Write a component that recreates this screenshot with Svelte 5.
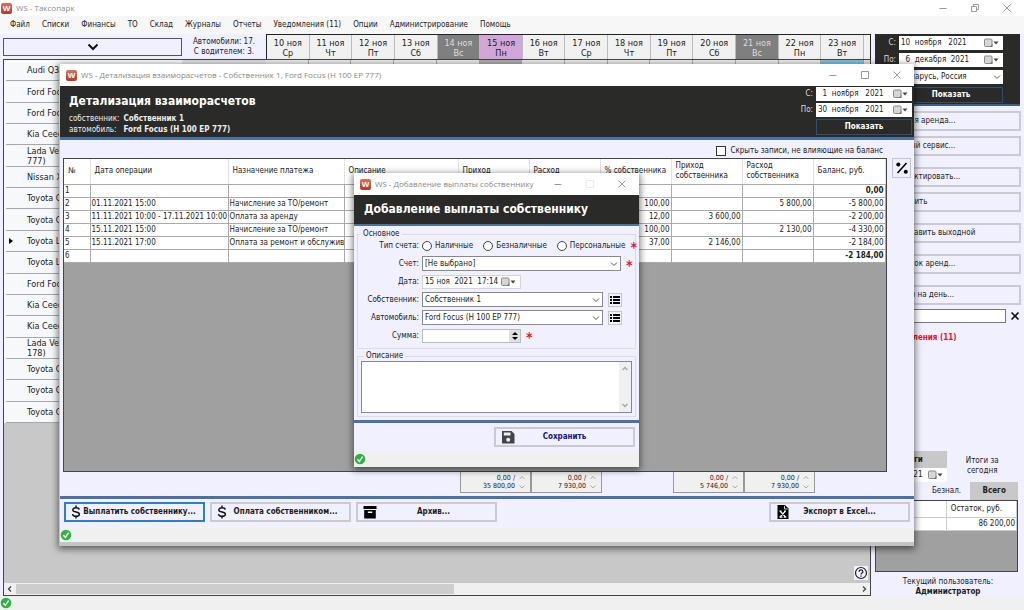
<script lang="ts">
  type Day = { date: string; dow: string; kind?: string };

  const menu = ['Файл', 'Списки', 'Финансы', 'ТО', 'Склад', 'Журналы', 'Отчеты', 'Уведомления (11)', 'Опции', 'Администрирование', 'Помощь'];

  const days: Day[] = [
    { date: '10 ноя', dow: 'Ср' },
    { date: '11 ноя', dow: 'Чт' },
    { date: '12 ноя', dow: 'Пт' },
    { date: '13 ноя', dow: 'Сб' },
    { date: '14 ноя', dow: 'Вс', kind: 'off' },
    { date: '15 ноя', dow: 'Пн', kind: 'today' },
    { date: '16 ноя', dow: 'Вт' },
    { date: '17 ноя', dow: 'Ср' },
    { date: '18 ноя', dow: 'Чт' },
    { date: '19 ноя', dow: 'Пт' },
    { date: '20 ноя', dow: 'Сб' },
    { date: '21 ноя', dow: 'Вс', kind: 'off' },
    { date: '22 ноя', dow: 'Пн' },
    { date: '23 ноя', dow: 'Вт', kind: 'busy' },
  ];

  const cars = [
    'Audi Q3', 'Ford Focus', 'Ford Focus', 'Kia Ceed', 'Lada Vesta 777)', 'Nissan X', 'Toyota C', 'Toyota C', 'Toyota L',
    'Toyota L', 'Ford Focus', 'Kia Ceed', 'Kia Ceed', 'Lada Vesta 178)', 'Toyota C', 'Toyota C', 'Toyota C',
  ];
  const currentCar = 8;

  const actions = [
    ['Новая аренда...', 'Новый сервис...'],
    ['Редактировать...', 'Удалить'],
    ['Поставить выходной'],
    ['Список аренд...'],
    ['План на день...'],
  ];

  const columns = [
    { title: '№', width: 26 },
    { title: 'Дата операции', width: 138 },
    { title: 'Назначение платежа', width: 116 },
    { title: 'Описание', width: 114 },
    { title: 'Приход', width: 71 },
    { title: 'Расход', width: 71 },
    { title: '% собственника', width: 71 },
    { title: 'Приход собственника', width: 71 },
    { title: 'Расход собственника', width: 71 },
    { title: 'Баланс, руб.', width: 72 },
  ];

  const rows = [
    ['1', '', '', '', '', '', '', '', '', '0,00'],
    ['2', '01.11.2021 15:00', 'Начисление за ТО/ремонт', '', '', '', '100,00', '', '5 800,00', '-5 800,00'],
    ['3', '11.11.2021 10:00 - 17.11.2021 10:00', 'Оплата за аренду', '', '', '', '12,00', '3 600,00', '', '-2 200,00'],
    ['4', '15.11.2021 15:00', 'Начисление за ТО/ремонт', '', '', '', '100,00', '', '2 130,00', '-4 330,00'],
    ['5', '15.11.2021 17:00', 'Оплата за ремонт и обслужив', '', '', '', '37,00', '2 146,00', '', '-2 184,00'],
    ['6', '', '', '', '', '', '', '', '', '-2 184,00'],
  ];

  const totals = [['35 800,00', '7 930,00'], ['5 746,00', '7 930,00']];
  const accountTypes = ['Наличные', 'Безналичные', 'Персональные'];

  let hideZero = $state(false);
  let accountType = $state('');
  let amount = $state('');
  let note = $state('');
</script>

{#snippet chevron()}
  <svg class="chevron" viewBox="0 0 8 8" aria-hidden="true"><path d="M1 2.5 4 5.5 7 2.5" /></svg>
{/snippet}

{#snippet ok()}
  <svg class="ok" viewBox="0 0 12 12" aria-hidden="true">
    <circle cx="6" cy="6" r="5.3" fill="#2fb344" />
    <path d="M3.4 6.3 5.3 8.4 8.6 3.6" fill="none" stroke="#fff" stroke-width="1.5" />
  </svg>
{/snippet}

{#snippet winButtons(mode: string)}
  <div class="win-buttons {mode}">
    <button aria-label="Свернуть"><svg viewBox="0 0 10 10"><path d="M1.5 5.5h7" /></svg></button>
    <button aria-label="Развернуть" disabled={mode === 'modal'}>
      <svg viewBox="0 0 10 10">
        {#if mode === 'main'}
          <path d="M1.5 3.5h5v5h-5zM3.5 3.5v-2h5v5h-2" />
        {:else}
          <path d="M1.5 1.5h7v7h-7z" />
        {/if}
      </svg>
    </button>
    <button aria-label="Закрыть"><svg viewBox="0 0 10 10"><path d="M1.5 1.5l7 7M8.5 1.5l-7 7" /></svg></button>
  </div>
{/snippet}

{#snippet titleBar(text: string, mode: string)}
  <header class="title-bar {mode}">
    <span class="logo">W</span>
    <span class="caption">{text}</span>
    {@render winButtons(mode)}
  </header>
{/snippet}

{#snippet dateField(id: string, value: string)}
  <div class="date">
    <input {id} type="text" {value} />
    <button type="button" aria-label="Календарь">
      <svg viewBox="0 0 16 10">
        <rect x="1.5" y="1" width="7.5" height="7.5" rx="1" fill="#d6d6d6" stroke="#8a8a8a" />
        <path d="M6.5 9 9.5 6V9z" fill="#777" />
        <path d="M10.5 3.5h5L13 6.5z" fill="#444" />
      </svg>
    </button>
  </div>
{/snippet}

{#snippet listButton(label: string)}
  <button type="button" class="list-btn" aria-label={label}>
    <svg viewBox="0 0 12 10">
      <path d="M1 1h2v2H1zM4 1h7v2H4zM1 4h2v2H1zM4 4h7v2H4zM1 7h2v2H1zM4 7h7v2H4z" />
    </svg>
  </button>
{/snippet}

{#snippet dollar()}
  <svg class="dollar" viewBox="0 0 10 14" aria-hidden="true">
    <path d="M5 .5v2.500M5 11v2.500M8.300 4.600C8 3.400 6.700 2.800 5 2.800 3 2.800 1.800 3.600 1.800 4.900c0 3 6.600 1.300 6.600 4.300 0 1.300-1.300 2.100-3.400 2.100-2 0-3.300-.8-3.500-2.200" />
  </svg>
{/snippet}

<div class="app">
  {@render titleBar('WS - Таксопарк', 'main')}
  <nav class="menu">
    {#each menu as item}
      <button>{item}</button>
    {/each}
  </nav>

  <div class="workspace">
    <main class="schedule">
      <div class="schedule-top">
        <button class="filter" aria-label="Фильтр">
          <svg viewBox="0 0 12 8"><path d="M1.500 1.500 6 6l4.500-4.500" /></svg>
        </button>
        <p class="counts">Автомобили: 17.<br />С водителем: 3.</p>
        <div class="days">
          {#each days as day}
            <div class="day {day.kind ?? ''}">{day.date}<br />{day.dow}</div>
          {/each}
        </div>
      </div>
      <div class="board">
        <div class="board-body">
          <ul class="cars">
            {#each cars as car, i}
              <li>
                <span class="marker">{#if i === currentCar}<svg viewBox="0 0 4 6"><path d="M0 0l4 3-4 3z" /></svg>{/if}</span>
                <span class="car">{car}</span>
              </li>
            {/each}
          </ul>
          <div class="slots">
            {#each days as day}
              <div class="slot {day.kind ?? ''}"></div>
            {/each}
          </div>
          <button class="help" aria-label="Справка">
            <svg viewBox="0 0 14 14">
              <circle cx="7" cy="7" r="5.500" />
              <path d="M5.200 5.700c0-2.500 3.700-2.300 3.700 0C8.900 7 7 7 7 8.600M7 9.500v1.200" />
            </svg>
          </button>
        </div>
        <div class="hscroll">
          <button aria-label="Влево"><svg viewBox="0 0 8 8"><path d="M5 1.500 2.500 4 5 6.500" /></svg></button>
          <div class="track"><div class="thumb"></div></div>
          <button aria-label="Вправо"><svg viewBox="0 0 8 8"><path d="M3 1.500 5.500 4 3 6.500" /></svg></button>
        </div>
      </div>
    </main>

    <aside class="side">
      <div class="period">
        <label for="from">С:</label>
        {@render dateField('from', '10  ноября   2021')}
        <label for="to">По:</label>
        {@render dateField('to', '  6  декабря  2021')}
        <div class="select region">
          <select aria-label="Регион"><option>Беларусь, Россия</option></select>
          {@render chevron()}
        </div>
        <button class="show">Показать</button>
      </div>
      <div class="actions">
        {#each actions as group}
          <div class="group">
            {#each group as action}
              <button class="flat">{action}</button>
            {/each}
          </div>
        {/each}
      </div>
      <div class="search">
        <input type="text" aria-label="Поиск" />
        <button aria-label="Очистить"><svg viewBox="0 0 10 10"><path d="M1.500 1.500l7 7M8.500 1.500l-7 7" /></svg></button>
      </div>
      <a class="alerts" href="#alerts">Уведомления (11)</a>

      <section class="summary">
        <div class="summary-top">
          <div>
            <div class="tab active">Итоги</div>
            {@render dateField('day', '15 ноя 2021')}
          </div>
          <p>Итоги за<br />сегодня</p>
        </div>
        <div class="tabs">
          <button>Нал.</button>
          <button>Безнал.</button>
          <button class="active">Всего</button>
        </div>
        <div class="balance">
          <table>
            <thead><tr><th></th><th>Остаток, руб.</th></tr></thead>
            <tbody><tr><td></td><td class="num">86 200,00</td></tr></tbody>
          </table>
        </div>
        <p class="user">Текущий пользователь:<br /><b>Администратор</b></p>
      </section>
    </aside>
  </div>
  <footer class="status">{@render ok()}</footer>

  <section class="window details">
    {@render titleBar('WS - Детализация взаиморасчетов - Собственник 1, Ford Focus (Н 100 ЕР 777)', 'child')}
    <div class="head">
      <div>
        <h1>Детализация взаиморасчетов</h1>
        <dl>
          <dt>собственник:</dt><dd>Собственник 1</dd>
          <dt>автомобиль:</dt><dd>Ford Focus (Н 100 ЕР 777)</dd>
        </dl>
      </div>
      <div class="period">
        <label for="d-from">С:</label>
        {@render dateField('d-from', '  1  ноября   2021')}
        <label for="d-to">По:</label>
        {@render dateField('d-to', '30  ноября   2021')}
        <button class="show">Показать</button>
      </div>
    </div>
    <div class="details-body">
      <label class="hide-zero"><input type="checkbox" bind:checked={hideZero} />Скрыть записи, не влияющие на баланс</label>
      <div class="grid-row">
        <div class="grid">
          <table>
            <colgroup>
              {#each columns as c}<col style="width: {c.width}px" />{/each}
            </colgroup>
            <thead>
              <tr>{#each columns as c}<th>{c.title}</th>{/each}</tr>
            </thead>
            <tbody>
              {#each rows as row, r}
                <tr>
                  {#each row as cell, i}
                    <td class:num={i > 3} class:strong={i === 9 && (r === 0 || r === rows.length - 1)}>{cell}</td>
                  {/each}
                </tr>
              {/each}
            </tbody>
          </table>
        </div>
        <button class="percent" aria-label="Процент">
          <svg viewBox="0 0 14 14">
            <path d="M11.500 2 2.500 12" fill="none" stroke="#000" stroke-width="1.600" />
            <circle cx="3.300" cy="3.500" r="2" /><circle cx="10.800" cy="10.800" r="2" />
          </svg>
        </button>
      </div>
      <div class="totals">
        {#each totals as pair}
          <div class="pair">
            {#each pair as sum}
              <div class="total">
                <span>0,00 /<br />{sum}</span>
                <svg viewBox="0 0 8 16"><path d="M1.500 5 4 2.500 6.500 5M1.500 11.500 4 14l2.500-2.500" /></svg>
              </div>
            {/each}
          </div>
        {/each}
      </div>
    </div>
    <div class="toolbar">
      <button class="flat focus">{@render dollar()}<span>Выплатить собственнику...</span></button>
      <button class="flat">{@render dollar()}<span>Оплата собственником...</span></button>
      <button class="flat">
        <svg class="ico" viewBox="0 0 14 14"><path d="M.5 1h13v3H.5zM1.200 5h11.600v8.500H1.200z" /><path d="M4.800 6.500h4.400V8H4.800z" fill="#fff" /></svg>
        <span>Архив...</span>
      </button>
      <button class="flat centered export">
        <svg class="ico" viewBox="0 0 14 14"><path d="M1.500 0H9l3.500 3.500V14h-11z" /><path d="M8.500.8V4h3.300" fill="none" stroke="#fff" stroke-width=".8" /><path d="M4 6l5.500 6M9.500 6 4 12M3.500 12.200h3M7.800 12.200h2.500M3.500 6h2M8 6h2" fill="none" stroke="#fff" stroke-width="1.200" /></svg>
        <span>Экспорт в Excel...</span>
      </button>
    </div>
    <footer class="status">{@render ok()}</footer>
  </section>

  <section class="window payout">
    {@render titleBar('WS - Добавление выплаты собственнику', 'modal')}
    <div class="head"><h1>Добавление выплаты собственнику</h1></div>
    <form class="payout-body">
      <fieldset class="main-fields">
        <legend>Основное</legend>
        <span class="name">Тип счета:</span>
        <div class="line radios">
          {#each accountTypes as type}
            <label><input type="radio" name="account-type" value={type} bind:group={accountType} />{type}</label>
          {/each}
          <span class="required">*</span>
        </div>
        <label class="name" for="account">Счет:</label>
        <div class="line">
          <div class="select wide">
            <select id="account"><option>[Не выбрано]</option></select>
            {@render chevron()}
          </div>
          <span class="required">*</span>
        </div>
        <label class="name" for="when">Дата:</label>
        <div class="line">{@render dateField('when', '15 ноя  2021  17:14')}</div>
        <label class="name" for="owner">Собственник:</label>
        <div class="line">
          <div class="select">
            <select id="owner"><option>Собственник 1</option></select>
            {@render chevron()}
          </div>
          {@render listButton('Список собственников')}
        </div>
        <label class="name" for="car">Автомобиль:</label>
        <div class="line">
          <div class="select">
            <select id="car"><option>Ford Focus (Н 100 ЕР 777)</option></select>
            {@render chevron()}
          </div>
          {@render listButton('Список автомобилей')}
        </div>
        <label class="name" for="amount">Сумма:</label>
        <div class="line">
          <div class="spin">
            <input id="amount" type="text" bind:value={amount} />
            <div class="arrows">
              <button type="button" aria-label="Больше"><svg viewBox="0 0 6 4"><path d="M0 4l3-3 3 3z" /></svg></button>
              <button type="button" aria-label="Меньше"><svg viewBox="0 0 6 4"><path d="M0 0l3 3 3-3z" /></svg></button>
            </div>
          </div>
          <span class="required">*</span>
        </div>
      </fieldset>
      <fieldset class="note">
        <legend>Описание</legend>
        <div class="memo">
          <textarea aria-label="Описание" bind:value={note}></textarea>
          <div class="vscroll">
            <svg viewBox="0 0 8 8"><path d="M1.500 5 4 2.500 6.500 5" /></svg>
            <svg viewBox="0 0 8 8"><path d="M1.500 3 4 5.500 6.500 3" /></svg>
          </div>
        </div>
      </fieldset>
    </form>
    <div class="toolbar">
      <button class="flat centered save">
        <svg class="ico" viewBox="0 0 14 14"><path d="M1 1h9.500L13.500 4v9.500H1z" fill="#444" /><path d="M2.800 2.500h6.700v3H2.800z" fill="#eee" /><circle cx="7.200" cy="9.700" r="2" fill="#eee" /></svg>
        <span>Сохранить</span>
      </button>
    </div>
    <footer class="status">{@render ok()}</footer>
  </section>
</div>

<style>
  :global(body) {
    margin: 0;
  }
  .app,
  .app * {
    box-sizing: border-box;
  }
  .app {
    position: relative;
    display: flex;
    flex-direction: column;
    min-height: 100vh;
    overflow: hidden;
    background: #f0f0fe;
    color: #1c1c1c;
    font: 8px/10px 'DejaVu Sans Condensed', 'DejaVu Sans', sans-serif;
  }
  button,
  input,
  select,
  textarea {
    font: inherit;
    color: inherit;
    margin: 0;
    padding: 0;
    border: 0;
    border-radius: 0;
    background: none;
    outline: none;
    min-width: 0;
  }
  p,
  h1,
  dl,
  dd,
  ul {
    margin: 0;
    padding: 0;
  }
  svg {
    display: block;
    flex: none;
  }

  /* window chrome */
  .title-bar {
    display: flex;
    align-items: center;
    gap: 4px;
    height: 22px;
    padding-left: 6px;
    background: #fff;
    color: #888;
    font: 8px/12px 'Open Sans', sans-serif;
  }
  .title-bar.main {
    height: 16px;
    padding-left: 1px;
  }
  .logo {
    flex: none;
    width: 11px;
    height: 11px;
    border-radius: 2px;
    background: linear-gradient(#d9705c, #b03a2c);
    color: #fff;
    font: bold 8px/11px 'Liberation Sans', sans-serif;
    text-align: center;
  }
  .caption {
    white-space: nowrap;
  }
  .win-buttons {
    display: flex;
    gap: 22px;
    margin-left: auto;
    padding-right: 12px;
  }
  .win-buttons svg {
    width: 10px;
    height: 10px;
    fill: none;
    stroke: #999;
  }
  .win-buttons button:disabled {
    opacity: 0.2;
  }
  .status {
    display: flex;
    align-items: center;
    height: 14px;
    background: #f0f0f0;
  }
  .ok {
    width: 12px;
    height: 12px;
  }
  .menu {
    display: flex;
    gap: 12px;
    height: 18px;
    padding-left: 10px;
    background: #f7f7f7;
  }

  /* schedule */
  .workspace {
    flex: 1;
    display: flex;
    gap: 4px;
    padding: 0 3px;
  }
  .schedule {
    flex: 1;
    display: flex;
    flex-direction: column;
  }
  .schedule-top {
    display: flex;
    align-items: center;
    height: 25px;
  }
  .filter {
    display: grid;
    place-items: center;
    width: 179px;
    height: 18px;
    border: 1px solid #555;
  }
  .filter svg {
    width: 12px;
    height: 8px;
    fill: none;
    stroke: #111;
    stroke-width: 2;
  }
  .counts {
    width: 84px;
    text-align: center;
  }
  .days {
    flex: 1;
    display: grid;
    grid-template-columns: repeat(14, 1fr);
    align-self: stretch;
    padding-right: 6px;
    border: 1px solid #222;
    border-bottom: 0;
    background: #f1f1f1;
    font-size: 9px;
  }
  .day {
    padding-top: 3px;
    border-right: 1px solid #bbb;
    text-align: center;
  }
  .day.off {
    background: #7f7f7f;
    color: #ddd;
  }
  .day.today {
    background: #d3a6d9;
  }
  .board {
    flex: 1;
    display: flex;
    flex-direction: column;
    border: 1px solid #444;
    background: #c8c8c8;
  }
  .board-body {
    flex: 1;
    position: relative;
    display: flex;
    align-items: flex-start;
  }
  .cars {
    display: grid;
    grid-template-rows: repeat(17, 1fr);
    width: 178px;
    height: 363px;
    list-style: none;
    background: #f6f8fb;
    font-size: 9px;
  }
  .cars li {
    display: flex;
    align-items: center;
    margin-left: 2px;
    border-bottom: 1px solid #a8a8a8;
  }
  .marker {
    width: 21px;
    padding-left: 3px;
  }
  .marker svg {
    width: 4px;
    height: 6px;
  }
  .car {
    width: 54px;
  }
  .slots {
    flex: 1;
    display: grid;
    grid-template-columns: repeat(14, 1fr);
    height: 20px;
    padding: 0 6px 0 84px;
    background: #e2e2e2;
  }
  .slot {
    border-right: 1px solid #aaa;
    background: #ededed;
  }
  .slot.today {
    background: #b0b0b0;
  }
  .slot.busy {
    background: #7fc4e2;
  }
  .help {
    position: absolute;
    right: 2px;
    bottom: 3px;
    background: #f0f0fe;
  }
  .help svg {
    width: 14px;
    height: 14px;
    fill: none;
    stroke: #222;
    stroke-width: 1.2;
  }
  .hscroll {
    display: flex;
    align-items: center;
    height: 12px;
    background: #f0f0f0;
  }
  .hscroll button {
    width: 12px;
    padding: 0 2px;
  }
  .hscroll svg {
    width: 8px;
    height: 8px;
    fill: none;
    stroke: #444;
    stroke-width: 1.3;
  }
  .track {
    flex: 1;
    align-self: stretch;
    padding: 1px 0;
  }
  .thumb {
    width: 52%;
    height: 10px;
    background: #cdcdcd;
  }

  /* shared fields */
  .period {
    display: grid;
    grid-template-columns: 20px minmax(0, 1fr);
    gap: 2px 3px;
  }
  .period label {
    line-height: 14px;
    text-align: right;
    color: #ddd;
  }
  .date {
    display: flex;
    align-items: center;
    height: 14px;
    background: #fff;
    color: #1c1c1c;
  }
  .date input {
    flex: 1;
    width: 0;
    padding-left: 2px;
    white-space: pre;
  }
  .date svg {
    width: 16px;
    height: 10px;
    margin-right: 4px;
  }
  .select {
    position: relative;
    height: 14px;
    background: #fff;
    color: #1c1c1c;
  }
  .select select {
    display: block;
    width: 100%;
    height: 100%;
    padding-left: 2px;
    appearance: none;
  }
  .chevron {
    position: absolute;
    right: 2px;
    top: 3px;
    width: 8px;
    height: 8px;
    fill: none;
    stroke: #555;
    pointer-events: none;
  }
  .region,
  .show {
    grid-column: 2;
  }
  .show {
    height: 16px;
    border: 1px solid #33506b;
    color: #fff;
    font-weight: bold;
  }
  .flat {
    display: flex;
    align-items: center;
    height: 20px;
    padding: 0 5px;
    border: 2px solid #cacad2;
    background: #f0f0fe;
  }

  /* right panel */
  .side {
    display: flex;
    flex-direction: column;
    width: 146px;
  }
  .side .period {
    row-gap: 3px;
    margin-right: 1px;
    padding: 2px 17px 1px 1px;
    border-bottom: 2px solid #3c6188;
    background: #2a2a28;
  }
  .actions {
    display: flex;
    flex-direction: column;
    gap: 11px;
    padding-top: 5px;
  }
  .group {
    display: grid;
    gap: 5px;
  }
  .side .flat {
    padding-left: 19px;
  }
  .search {
    display: flex;
    gap: 4px;
    margin-top: 4px;
    padding-right: 1px;
  }
  .search input {
    flex: 1;
    height: 14px;
    border: 1px solid #777;
    background: #fff;
  }
  .search svg {
    width: 10px;
    height: 10px;
    fill: none;
    stroke: #111;
    stroke-width: 1.6;
  }
  .alerts {
    margin-top: 10px;
    padding-left: 6px;
    color: #d8182c;
    font-weight: bold;
    text-decoration: none;
  }
  .summary {
    margin-top: auto;
    margin-right: 3px;
  }
  .summary-top {
    display: grid;
    grid-template-columns: 1fr 1fr;
    text-align: center;
  }
  .summary-top p {
    padding-top: 5px;
  }
  .tab {
    line-height: 17px;
  }
  .active {
    background: #c8c8c8;
    font-weight: bold;
  }
  .tabs {
    display: grid;
    grid-template-columns: 1fr 1fr 1fr;
    height: 18px;
  }
  .balance {
    height: 72px;
    border: 1px solid #444;
    background: #a0a0a0;
  }
  table {
    width: 100%;
    border-collapse: collapse;
    table-layout: fixed;
    background: #fff;
  }
  th {
    font-weight: normal;
    text-align: left;
  }
  .balance th,
  .balance td {
    height: 16px;
    padding: 0 1px 0 4px;
    border-right: 1px solid #ccc;
    border-bottom: 1px solid #ccc;
  }
  .balance td {
    height: 13px;
  }
  .num {
    text-align: right;
  }
  .user {
    padding: 5px 0 0 3px;
    height: 24px;
    text-align: center;
  }

  /* dialogs */
  .window {
    position: absolute;
    display: flex;
    flex-direction: column;
    background: #f0f0fe;
    box-shadow: 0 2px 7px 1px rgb(0 0 0 / 55%);
  }
  .head {
    display: flex;
    justify-content: space-between;
    background: #2a2a28;
    border-bottom: 3px solid #4a72a4;
    color: #eee;
  }
  .head h1 {
    font-size: 12px;
    line-height: 16px;
    color: #fff;
  }
  .toolbar {
    display: flex;
    gap: 5px;
    border-top: 3px solid #4a72a4;
  }
  .toolbar .flat {
    width: 141px;
    font-weight: bold;
  }
  .toolbar .flat span {
    flex: 1;
    text-align: center;
    white-space: nowrap;
  }
  .toolbar .centered {
    padding-right: 19px;
  }
  .ico {
    width: 14px;
    height: 14px;
  }
  .details {
    left: 59px;
    right: 110px;
    top: 64px;
    border: solid #c4c4c4;
    border-width: 0 0 4px 1px;
  }
  .details .head {
    height: 54px;
    padding: 7px 2px 0 9px;
  }
  .details dl {
    display: grid;
    grid-template-columns: auto 1fr;
    gap: 1px 4px;
    padding-top: 5px;
  }
  .details dd {
    font-weight: bold;
  }
  .details .head .period {
    width: 119px;
    margin-top: -6px;
    align-content: start;
  }
  .details-body {
    padding: 4px 3px 3px;
  }
  .hide-zero {
    display: flex;
    align-items: center;
    justify-content: flex-end;
    gap: 4px;
    height: 14px;
    padding-right: 28px;
  }
  .hide-zero input {
    width: 10px;
    height: 10px;
    appearance: none;
    border: 1px solid #333;
    background: #fff;
  }
  .hide-zero input:checked {
    background: #333;
  }
  .grid-row {
    display: flex;
    align-items: flex-start;
    gap: 5px;
  }
  .grid {
    flex: 1;
    height: 314px;
    border: 1px solid #444;
    background: #a0a0a0;
  }
  .grid th {
    height: 25px;
    padding: 0 0 0 4px;
    border-right: 1px solid #e2e2e2;
    border-bottom: 1px solid #aaa;
  }
  .grid td {
    height: 13px;
    padding: 0 1px;
    border-right: 1px solid #aaa;
    border-bottom: 1px solid #aaa;
    white-space: nowrap;
  }
  .strong {
    font-weight: bold;
  }
  .percent {
    padding: 2px;
    border: 1px solid #c4c4cc;
  }
  .percent svg {
    width: 14px;
    height: 14px;
  }
  .totals {
    display: flex;
    justify-content: flex-end;
    gap: 71px;
    padding-right: 96px;
  }
  .pair {
    display: flex;
  }
  .total {
    display: flex;
    align-items: center;
    justify-content: flex-end;
    width: 71px;
    height: 21px;
    padding-right: 4px;
    gap: 3px;
    border: 1px solid #999;
    border-top: 0;
    background: #f0f0f0;
    font-size: 7px;
    line-height: 8px;
    text-align: right;
  }
  .total svg {
    width: 8px;
    height: 16px;
    fill: none;
    stroke: #aaa;
  }
  .details .toolbar {
    padding: 3px 4px 6px;
  }
  .toolbar .focus {
    border-color: #2d7fca;
  }
  .export {
    margin-left: auto;
  }
  .dollar {
    width: 10px;
    height: 14px;
    fill: none;
    stroke: #111;
    stroke-width: 1.4;
  }

  .payout {
    left: 354px;
    top: 173px;
    width: 285px;
  }
  .payout .head {
    padding: 6px 10px 7px;
    border-bottom-width: 2px;
  }
  .payout-body {
    display: grid;
    gap: 3px;
    padding: 4px 3px 3px;
  }
  fieldset {
    margin: 0;
    border: 1px solid #dcdce8;
    min-width: 0;
  }
  legend {
    padding: 0 2px;
    margin-left: 3px;
    line-height: 8px;
  }
  .main-fields {
    display: grid;
    grid-template-columns: 61px 1fr;
    gap: 3px;
    padding: 0 0 5px;
  }
  .name {
    line-height: 15px;
    text-align: right;
  }
  .line {
    display: flex;
    align-items: center;
    gap: 5px;
    height: 15px;
  }
  .line .select {
    width: 181px;
    height: 15px;
    border: 1px solid #888;
  }
  .line .wide {
    width: 199px;
  }
  .line .date {
    width: 99px;
    border: 1px solid #d4d4d4;
  }
  .radios {
    gap: 10px;
  }
  .radios label {
    display: flex;
    align-items: center;
    gap: 3px;
  }
  .radios input {
    width: 10px;
    height: 10px;
    appearance: none;
    border: 1px solid #444;
    border-radius: 50%;
    background: #fff;
  }
  .radios input:checked {
    background: #444;
  }
  .required {
    padding-top: 3px;
    color: #e0182c;
    font-size: 14px;
    font-weight: bold;
    line-height: 14px;
  }
  .radios .required {
    margin-left: -5px;
  }
  .list-btn {
    padding: 1px 0;
    border: 1px solid #c4c4cc;
  }
  .list-btn svg {
    width: 12px;
    height: 10px;
  }
  .spin {
    display: flex;
    width: 99px;
    height: 14px;
    border: 1px solid #bbb;
    background: #fff;
  }
  .spin input {
    flex: 1;
  }
  .arrows {
    display: grid;
    width: 11px;
    background: #e0e0e0;
  }
  .arrows button {
    display: grid;
    place-items: center;
  }
  .arrows svg {
    width: 6px;
    height: 4px;
  }
  .note {
    padding: 1px 3px 3px;
  }
  .memo {
    display: flex;
    height: 52px;
    border: 1px solid #888;
    background: #fff;
  }
  .memo textarea {
    flex: 1;
    resize: none;
  }
  .vscroll {
    display: flex;
    flex-direction: column;
    justify-content: space-between;
    width: 12px;
    padding: 3px 2px;
    background: #f0f0f0;
  }
  .vscroll svg {
    width: 8px;
    height: 8px;
    fill: none;
    stroke: #aaa;
    stroke-width: 1.5;
  }
  .payout .toolbar {
    justify-content: flex-end;
    padding: 4px 4px 4px 0;
  }
  .payout .status {
    height: 16px;
  }
  .save {
    color: #14147c;
  }
</style>
